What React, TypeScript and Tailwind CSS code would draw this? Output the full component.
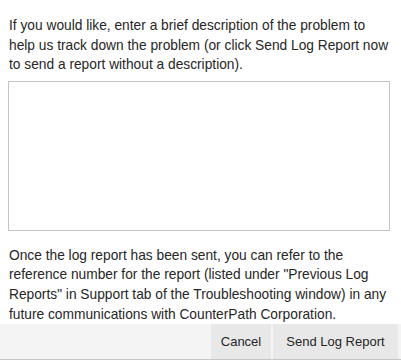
export default function App() {
  return (
    <div className="w-[401px] h-[361px] bg-white flex flex-col text-[13.75px] leading-[19.6px] text-[#262626] font-['Liberation_Sans',Arial,sans-serif]">
      <p className="pt-[16px] pl-[9px] pr-[4px] whitespace-nowrap">
        If you would like, enter a brief description of the problem to
        <br />
        help us track down the problem (or click Send Log Report now
        <br />
        to send a report without a description).
      </p>

      <textarea
        className="mt-[6px] ml-[8px] w-[382px] h-[150px] shrink-0 border border-[#c4c4c4] bg-white resize-none outline-none p-1"
        aria-label="Problem description"
      />

      <p className="mt-[15px] pl-[9px] pr-[4px] whitespace-nowrap">
        Once the log report has been sent, you can refer to the
        <br />
        reference number for the report (listed under "Previous Log
        <br />
        Reports" in Support tab of the Troubleshooting window) in any
        <br />
        future communications with CounterPath Corporation.
      </p>

      <div className="mt-auto mb-[3px] h-[36px] shrink-0 bg-[#f4f4f4] border-b border-[#c6c6c6] flex justify-end gap-[2px] pr-[3px] text-[13px]">
        <button className="w-[60px] bg-[#e8e8e8] text-[#262626]">Cancel</button>
        <button className="w-[125px] bg-[#e8e8e8] text-[#262626]">Send Log Report</button>
      </div>
    </div>
  );
}
